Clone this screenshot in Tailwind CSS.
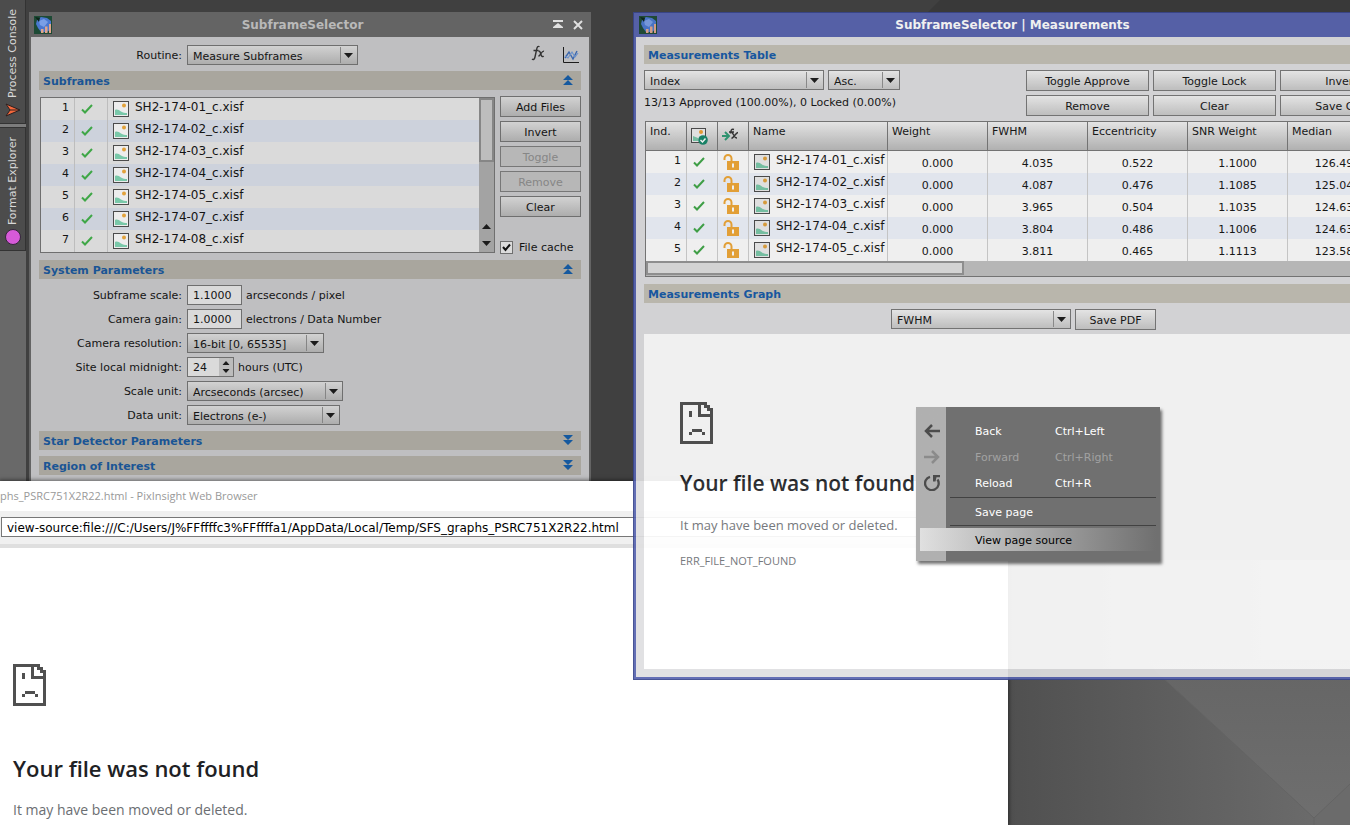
<!DOCTYPE html>
<html lang="en">
<head>
<meta charset="utf-8">
<title>PixInsight</title>
<script src="https://cdn.jsdelivr.net/npm/@tailwindcss/browser@4"></script>
</head>
<body class="h-screen overflow-hidden bg-[#404040] font-['DejaVu_Sans',Verdana,sans-serif] text-[11px] leading-5 text-[#141414]">

<svg class="hidden" xmlns="http://www.w3.org/2000/svg">
  <symbol id="app" viewBox="0 0 18 18">
    <rect width="18" height="18" fill="#1d4a35"/>
    <path d="M3 4l4-3 6 1 4 3v8l-4 3H7l-3-4-2-4z" fill="#4a78d0"/><path d="M5 5l5-2 4 3-4 5-4-2z" fill="#7a9fe6"/><path d="M1 1l5 1-1 4z" fill="#0c2418"/>
    <path d="M7 13h2.500v4H7zM11 10.500h2.500V17H11zM15 8h2v9h-2z" fill="#e0a58c"/>
  </symbol>
  <symbol id="image" viewBox="0 0 16 16">
    <rect x=".5" y=".5" width="15" height="15" fill="#ededed" stroke="#4b4b4b"/>
    <path d="M2 9c2-1 4 0 6 1.500s4 1.500 6 1.500v2H2z" fill="#79c8a9"/><circle cx="11" cy="4.500" r="2" fill="#e2a23b"/>
  </symbol>
  <symbol id="check" viewBox="0 0 12 10"><path d="M1 5.500l3 3L11 1" fill="none" stroke="#3fa747" stroke-width="2"/></symbol>
  <symbol id="lock" viewBox="0 0 17 17">
    <path d="M1.500 6V4.500a3.500 3.500 0 0 1 7 0V8" fill="none" stroke="#f0a836" stroke-width="2"/>
    <path d="M4 7h12v9H4z" fill="#f0a836"/><path d="M9 9.500h2v4H9z" fill="#fff"/>
  </symbol>
  <symbol id="up" viewBox="0 0 10 11"><path d="M5 0l5 5H0zM5 5l5 5H0z" fill="#15599f"/></symbol>
  <symbol id="down" viewBox="0 0 10 11"><path d="M0 0h10L5 5zM0 5h10l-5 5z" fill="#15599f"/></symbol>
  <symbol id="tri" viewBox="0 0 9 5"><path d="M0 0h9L4.500 5z" fill="#1b1b1b"/></symbol>
  <symbol id="triup" viewBox="0 0 9 5"><path d="M0 5h9L4.500 0z" fill="#1b1b1b"/></symbol>
  <symbol id="sad" viewBox="0 0 33 42" shape-rendering="crispEdges">
    <path fill="#505050" d="M0 0h27v3h3v3h3v36H0zM3 3v36h27V15H18V3zM21 3v9h9V9h-3V6h-3V3z"/>
    <path fill="#505050" d="M9 9h3v6H9zM12 27h10v3H12zM9 30h3v3H9zM22 30h3v3h-3z"/>
  </symbol>
  <symbol id="fx" viewBox="0 0 14 16">
    <path d="M8.500 1.800C7 .6 6 2 5.500 5L4 12c-.5 2.500-1.800 3-3 2M2.500 5.500h5M7.500 6.500c2-1.500 2 4 3.500 5 .6.4 1.200 0 1.500-.6M13 6.200c-2-.5-3 3-5.500 5.200" fill="none" stroke="#333" stroke-width="1.400"/>
  </symbol>
</svg>

<main class="relative h-full w-full overflow-hidden">
  <!-- Workspace wallpaper -->
  <div class="absolute inset-0">
    <svg class="h-full w-full" viewBox="0 0 1350 825" preserveAspectRatio="none" aria-hidden="true">
      <defs>
        <linearGradient id="w1" x1="1008" x2="1320" y1="0" y2="0" gradientUnits="userSpaceOnUse"><stop stop-color="#505050"/><stop offset="1" stop-color="#6b6b6b"/></linearGradient>
        <linearGradient id="w2" x1="0" x2="0" y1="660" y2="825" gradientUnits="userSpaceOnUse"><stop stop-color="#656565"/><stop offset="1" stop-color="#6f6f6f"/></linearGradient>
      </defs>
      <path d="M940 0h410v20H920z" fill="#393939"/>
      <path d="M1008 560h342v265h-342z" fill="url(#w1)"/>
      <path d="M1144 660h206v124l-36 34z" fill="url(#w2)"/>
      <path d="M1144 660l170 158 36-34M1314 818v7" fill="none" stroke="#646464"/>
    </svg>
  </div>

  <!-- Docked tabs -->
  <aside class="absolute inset-y-0 left-0 flex w-[26px] flex-col bg-[#696969] text-[#d8d8d8]">
    <button class="flex h-[124px] flex-col items-center justify-end gap-1 border-r border-b border-[#333] bg-[#4c4c4c] pb-[5px]">
      <span class="rotate-180 leading-4 whitespace-nowrap [writing-mode:vertical-rl]">Process Console</span>
      <svg class="size-4" viewBox="0 0 16 16"><path d="M1 2l14 6-14 6 4-6z" fill="#f4683c" stroke="#2a2020"/><path d="M5 8h9" stroke="#2a2020"/></svg>
    </button>
    <div class="h-[3px] bg-[#7c7c7c]"></div>
    <button class="flex h-[124px] flex-col items-center justify-end gap-1 border-r border-y border-[#333] bg-[#4c4c4c] pb-[5px]">
      <span class="rotate-180 leading-4 whitespace-nowrap [writing-mode:vertical-rl]">Format Explorer</span>
      <span class="size-4 rounded-full border border-[#33263a] bg-[#d65ad8]"></span>
    </button>
  </aside>

  <!-- SubframeSelector -->
  <section class="absolute top-3 left-[29px] h-[490px] w-[562px] border-x-2 border-[#646464] bg-[#bfbfc1]">
    <header class="flex h-[25px] items-center bg-[#646464] px-[3px]">
      <svg class="size-[18px]"><use href="#app"/></svg>
      <h2 class="flex-1 text-center text-xs font-bold text-[#b9b9b9]">SubframeSelector</h2>
      <button class="mr-2.5" aria-label="Shade"><svg class="h-[9px] w-2.5" viewBox="0 0 10 9"><path d="M0 0h10v2H0zM5 3l5 4v1H0V7z" fill="#e0e0e0"/></svg></button>
      <button class="mr-[3px]" aria-label="Close"><svg class="size-[10px]" viewBox="0 0 10 10"><path d="M1 1l8 8M9 1L1 9" stroke="#e0e0e0" stroke-width="2"/></svg></button>
    </header>
    <div class="flex flex-col px-2 pt-2">
      <div class="flex h-5 items-center">
        <label for="routine" class="mr-[5px] w-[143px] pt-0.5 text-right">Routine:</label>
        <span class="relative h-5 w-[171px]"><select id="routine" class="h-5 w-full appearance-none border border-[#6f6f6f] bg-linear-to-b from-[#d2d2d2] to-[#adadad] pt-px pl-[5px]"><option>Measure Subframes</option></select><span class="pointer-events-none absolute inset-y-[2px] right-0.5 flex w-4 items-center justify-center border-l border-[#858585]"><svg class="h-[5px] w-[9px]"><use href="#tri"/></svg></span></span>
        <button class="ml-auto pb-1" aria-label="Expressions"><svg class="h-4 w-3.5"><use href="#fx"/></svg></button>
        <button class="mr-0.5 ml-[18px]" aria-label="Measurements"><svg class="size-4" viewBox="0 0 16 16"><path d="M.5 0v15.500H16" fill="none" stroke="#1c1c1c"/><path d="M2 11l4-6 4 7 4-8" fill="none" stroke="#3b67ae" stroke-width="1.400"/><path d="M2 9l3 2 4-6 3 5 3-4" fill="none" stroke="#6b92cc" stroke-width="1.200"/></svg></button>
      </div>
      <button class="mt-1.5 flex h-[19px] items-center justify-between bg-[#a9a69e] pt-0.5 pr-2 pl-1 font-bold text-[#1a5595]">Subframes<svg class="mb-0.5 h-[11px] w-2.5"><use href="#up"/></svg></button>
      <div class="mt-1.5 flex">
        <div class="mt-px ml-px flex h-[156px] w-[455px] border border-[#6f6f6f] bg-[#dadada]">
          <table class="w-full flex-1 border-separate border-spacing-0 self-start"><tbody id="files"></tbody></table>
          <div class="flex w-[15px] flex-col items-center bg-[#a3a3a3]">
            <div class="h-16 w-full border-2 border-[#868686] bg-[#bdbdbd]"></div>
            <svg class="mt-auto h-[5px] w-[9px]"><use href="#triup"/></svg>
            <svg class="mt-3 mb-[6px] h-[5px] w-[9px]"><use href="#tri"/></svg>
          </div>
        </div>
        <div class="ml-[5px] flex w-[81px] flex-col gap-1">
          <button class="h-[21px] border border-[#6f6f6f] bg-linear-to-b from-[#d2d2d2] to-[#adadad] pt-px">Add Files</button>
          <button class="h-[21px] border border-[#6f6f6f] bg-linear-to-b from-[#d2d2d2] to-[#adadad] pt-px">Invert</button>
          <button disabled class="h-[21px] border border-[#777] bg-[#b7b7b7] pt-px text-[#868686]">Toggle</button>
          <button disabled class="h-[21px] border border-[#777] bg-[#b7b7b7] pt-px text-[#868686]">Remove</button>
          <button class="h-[21px] border border-[#6f6f6f] bg-linear-to-b from-[#d2d2d2] to-[#adadad] pt-px">Clear</button>
          <label class="mt-[19px] flex h-3.5 items-center gap-1.5 whitespace-nowrap"><span class="relative flex size-[13px]"><input type="checkbox" checked class="size-[13px] appearance-none border border-[#6f6f6f] bg-[#dcdcdc]"><svg class="pointer-events-none absolute inset-0 size-[13px]" viewBox="0 0 13 13"><path d="M3 6l2.500 3L10 3.500" fill="none" stroke="#111" stroke-width="2"/></svg></span><span class="pt-0.5">File cache</span></label>
        </div>
      </div>
      <button class="mt-1.5 flex h-[19px] items-center justify-between bg-[#a9a69e] pt-0.5 pr-2 pl-1 font-bold text-[#1a5595]">System Parameters<svg class="mb-0.5 h-[11px] w-2.5"><use href="#up"/></svg></button>
      <div class="mt-1.5 grid grid-cols-[143px_1fr] gap-x-[5px] gap-y-1 leading-[22px] *:h-5">
        <label for="scale" class="text-right">Subframe scale:</label>
        <span class="flex gap-1"><input id="scale" value="1.1000" class="h-5 w-[55px] border border-[#6f6f6f] bg-[#dadada] px-[5px] pt-px">arcseconds / pixel</span>
        <label for="gain" class="text-right">Camera gain:</label>
        <span class="flex gap-1"><input id="gain" value="1.0000" class="h-5 w-[55px] border border-[#6f6f6f] bg-[#dadada] px-[5px] pt-px">electrons / Data Number</span>
        <label for="res" class="text-right">Camera resolution:</label>
        <span class="relative h-5 w-[137px]"><select id="res" class="h-5 w-full appearance-none border border-[#6f6f6f] bg-linear-to-b from-[#d2d2d2] to-[#adadad] pl-[5px]"><option>16-bit [0, 65535]</option></select><span class="pointer-events-none absolute inset-y-[2px] right-0.5 flex w-4 items-center justify-center border-l border-[#858585]"><svg class="h-[5px] w-[9px]"><use href="#tri"/></svg></span></span>
        <label for="mid" class="text-right">Site local midnight:</label>
        <span class="flex gap-1"><span class="flex h-5 w-[47px] border border-[#6f6f6f] bg-[#dadada]"><input id="mid" value="24" class="w-[31px] pt-px pl-[5px]"><span class="flex flex-1 flex-col items-center justify-center gap-1 bg-[#bcbcbc]"><svg class="h-1 w-2" viewBox="0 0 9 5"><use href="#triup"/></svg><svg class="h-1 w-2" viewBox="0 0 9 5"><use href="#tri"/></svg></span></span>hours (UTC)</span>
        <label for="sunit" class="text-right">Scale unit:</label>
        <span class="relative h-5 w-[156px]"><select id="sunit" class="h-5 w-full appearance-none border border-[#6f6f6f] bg-linear-to-b from-[#d2d2d2] to-[#adadad] pl-[5px]"><option>Arcseconds (arcsec)</option></select><span class="pointer-events-none absolute inset-y-[2px] right-0.5 flex w-4 items-center justify-center border-l border-[#858585]"><svg class="h-[5px] w-[9px]"><use href="#tri"/></svg></span></span>
        <label for="dunit" class="text-right">Data unit:</label>
        <span class="relative h-5 w-[153px]"><select id="dunit" class="h-5 w-full appearance-none border border-[#6f6f6f] bg-linear-to-b from-[#d2d2d2] to-[#adadad] pl-[5px]"><option>Electrons (e-)</option></select><span class="pointer-events-none absolute inset-y-[2px] right-0.5 flex w-4 items-center justify-center border-l border-[#858585]"><svg class="h-[5px] w-[9px]"><use href="#tri"/></svg></span></span>
      </div>
      <button class="mt-1.5 flex h-[19px] items-center justify-between bg-[#a9a69e] pt-0.5 pr-2 pl-1 font-bold text-[#1a5595]">Star Detector Parameters<svg class="mb-0.5 h-[11px] w-2.5"><use href="#down"/></svg></button>
      <button class="mt-1.5 flex h-[19px] items-center justify-between bg-[#a9a69e] pt-0.5 pr-2 pl-1 font-bold text-[#1a5595]">Region of Interest<svg class="mb-0.5 h-[11px] w-2.5"><use href="#down"/></svg></button>
    </div>
  </section>

  <!-- Web browser window -->
  <section class="absolute top-[481px] bottom-0 left-0 flex w-[1008px] flex-col bg-white shadow-[0_0_4px_1px_rgba(0,0,0,0.5)]">
    <h2 class="h-[30px] font-['Open_Sans','Noto_Sans',sans-serif] text-[11px] leading-[30px] text-[#999]">phs_PSRC751X2R22.html - PixInsight Web Browser</h2>
    <div class="flex border-b-4 border-[#dfdfdf] bg-[#f0f0f0] px-px pt-1.5 pb-[7px]">
      <input aria-label="Address" value="view-source:file:///C:/Users/J%FFffffc3%FFffffa1/AppData/Local/Temp/SFS_graphs_PSRC751X2R22.html" class="h-5 w-full border border-[#777] bg-white px-[5px] pt-0.5 text-xs text-black">
    </div>
    <div class="flex flex-col px-[13px] pt-[116px] font-['Open_Sans','Noto_Sans',sans-serif]">
      <svg class="h-[42px] w-[33px]"><use href="#sad"/></svg>
      <h1 class="mt-[47px] text-[22px] leading-[30px] font-semibold text-[#202124]">Your file was not found</h1>
      <p class="mt-[17px] text-sm leading-5 text-[#6b6e72]">It may have been moved or deleted.</p>
    </div>
  </section>

  <!-- Measurements window, slightly see-through -->
  <section class="absolute top-3 left-[633px] flex h-[668px] w-[781px] flex-col border border-[#39468b] bg-[#dfdfe1] opacity-92">
    <div class="flex flex-1 flex-col border-2 border-t-0 border-[#5763af]">
      <header class="flex h-6 items-center bg-[#5763af] px-[3px]">
        <svg class="size-[18px]"><use href="#app"/></svg>
        <h2 class="mr-10 flex-1 text-center text-xs font-bold text-white">SubframeSelector | Measurements</h2>
      </header>
      <div class="flex flex-1 flex-col p-2">
        <button class="flex h-[19px] items-center bg-[#c4c1b6] pt-0.5 pl-1 font-bold text-[#1459a8]">Measurements Table</button>
        <div class="mt-1.5 flex justify-between">
          <div>
            <div class="flex gap-1">
              <span class="relative h-5 w-[180px]"><select aria-label="Sort by" class="h-5 w-full appearance-none border border-[#787878] bg-linear-to-b from-[#f2f2f2] to-[#c9c9c9] pt-px pl-[5px]"><option>Index</option></select><span class="pointer-events-none absolute inset-y-[2px] right-0.5 flex w-4 items-center justify-center border-l border-[#909090]"><svg class="h-[5px] w-[9px]"><use href="#tri"/></svg></span></span>
              <span class="relative h-5 w-[72px]"><select aria-label="Order" class="h-5 w-full appearance-none border border-[#787878] bg-linear-to-b from-[#f2f2f2] to-[#c9c9c9] pt-px pl-[5px]"><option>Asc.</option></select><span class="pointer-events-none absolute inset-y-[2px] right-0.5 flex w-4 items-center justify-center border-l border-[#909090]"><svg class="h-[5px] w-[9px]"><use href="#tri"/></svg></span></span>
            </div>
            <p class="mt-0.5 leading-[22px] whitespace-nowrap">13/13 Approved (100.00%), 0 Locked (0.00%)</p>
          </div>
          <div class="grid grid-cols-[123px_123px_123px] gap-1">
            <button class="h-[21px] border border-[#787878] bg-linear-to-b from-[#f2f2f2] to-[#c9c9c9] pt-px">Toggle Approve</button>
            <button class="h-[21px] border border-[#787878] bg-linear-to-b from-[#f2f2f2] to-[#c9c9c9] pt-px">Toggle Lock</button>
            <button class="h-[21px] border border-[#787878] bg-linear-to-b from-[#f2f2f2] to-[#c9c9c9] pt-px">Invert</button>
            <button class="h-[21px] border border-[#787878] bg-linear-to-b from-[#f2f2f2] to-[#c9c9c9] pt-px">Remove</button>
            <button class="h-[21px] border border-[#787878] bg-linear-to-b from-[#f2f2f2] to-[#c9c9c9] pt-px">Clear</button>
            <button class="h-[21px] border border-[#787878] bg-linear-to-b from-[#f2f2f2] to-[#c9c9c9] pt-px">Save CSV</button>
          </div>
        </div>
        <div class="mt-[5px] ml-px flex flex-col overflow-hidden border border-[#787878] bg-white">
          <table class="w-full table-fixed border-separate border-spacing-0">
            <colgroup><col class="w-[41px]"><col class="w-[31px]"><col class="w-[31px]"><col class="w-[139px]"><col class="w-[100px]"><col class="w-[100px]"><col class="w-[100px]"><col class="w-[100px]"><col class="w-[100px]"><col></colgroup>
            <thead><tr class="h-[29px] bg-linear-to-b from-[#f2f2f2] to-[#b8b8b8] text-left align-top [&>th]:border-r [&>th]:border-b [&>th]:border-[#787878] [&>th]:p-0 [&>th]:pl-1 [&>th]:font-normal [&>th]:leading-5">
              <th>Ind.</th>
              <th><svg class="mt-1.5 size-[17px]" viewBox="0 0 17 17"><rect x=".5" y=".5" width="14" height="14" fill="#eee" stroke="#4b4b4b"/><path d="M2 8l5 2v3H2z" fill="#79c8a9"/><circle cx="10" cy="4" r="2" fill="#f0a030"/><circle cx="12" cy="12" r="4.800" fill="#16876a"/><path d="M9.500 12l2 2 3-3.500" fill="none" stroke="#fff" stroke-width="1.500"/></svg></th>
              <th><svg class="mt-[5px] size-4" viewBox="0 0 16 16"><path d="M0 9h7M3 5l4 4-4 4" fill="none" stroke="#2e9b75" stroke-width="2"/><path d="M12 2.500c-3-1-3 1-3.500 4M7 5h5M9.500 6c2-1 2 5 5.500 5M16 5.500c-2 0-4 5-6.500 6" fill="none" stroke="#333" stroke-width="1.400"/></svg></th>
              <th>Name</th><th>Weight</th><th>FWHM</th><th>Eccentricity</th><th>SNR Weight</th><th>Median</th><th></th>
            </tr></thead>
            <tbody id="meas"></tbody>
          </table>
          <div class="h-[15px] bg-[#c0c0c0]"><div class="h-[14px] w-[318px] border-2 border-[#959595] bg-[#e0e0e0]"></div></div>
        </div>
        <button class="mt-[7px] flex h-[19px] items-center bg-[#c4c1b6] pt-0.5 pl-1 font-bold text-[#1459a8]">Measurements Graph</button>
        <div class="mt-1.5 mb-1 flex justify-center gap-1">
          <span class="relative h-5 w-[180px]"><select aria-label="Graph" class="h-5 w-full appearance-none border border-[#787878] bg-linear-to-b from-[#f2f2f2] to-[#c9c9c9] pt-px pl-[5px]"><option>FWHM</option></select><span class="pointer-events-none absolute inset-y-[2px] right-0.5 flex w-4 items-center justify-center border-l border-[#909090]"><svg class="h-[5px] w-[9px]"><use href="#tri"/></svg></span></span>
          <button class="h-[21px] w-[81px] border border-[#787878] bg-linear-to-b from-[#f2f2f2] to-[#c9c9c9] pt-px">Save PDF</button>
        </div>
        <div class="flex-1 bg-white px-9 pt-[68px] font-['Open_Sans','Noto_Sans',sans-serif]">
          <svg class="h-[42px] w-[33px]"><use href="#sad"/></svg>
          <h1 class="mt-6 text-[21px] leading-[30px] font-semibold text-[#202124]">Your file was not found</h1>
          <p class="mt-[17px] text-[13px] leading-5 text-[#6b6e72]">It may have been moved or deleted.</p>
          <p class="mt-4 text-[11px] leading-5 text-[#6b6e72]">ERR_FILE_NOT_FOUND</p>
        </div>
      </div>
    </div>
  </section>

  <!-- Context menu -->
  <div role="menu" class="absolute top-[407px] left-[916px] flex h-[154px] w-[244px] flex-col bg-linear-to-r from-[#b0b0b0] from-[30px] to-[#707070] to-[30px] pt-[11px] leading-[22px] text-white shadow-[2px_3px_3px_rgba(0,0,0,0.55)]">
    <button role="menuitem" class="grid h-[26px] grid-cols-[59px_80px_1fr] items-center text-left"><svg class="ml-2 h-[14px] w-4" viewBox="0 0 16 14"><path d="M16 7H2M8 1L2 7l6 6" fill="none" stroke="#4c4c4c" stroke-width="2.500"/></svg><span class="pt-0.5">Back</span><span class="pt-0.5">Ctrl+Left</span></button>
    <button role="menuitem" disabled class="grid h-[26px] grid-cols-[59px_80px_1fr] items-center text-left text-[#a2a2a2]"><svg class="ml-2 h-[14px] w-4" viewBox="0 0 16 14"><path d="M0 7h14M8 1l6 6-6 6" fill="none" stroke="#8b8b8b" stroke-width="2.500"/></svg><span class="pt-0.5">Forward</span><span class="pt-0.5">Ctrl+Right</span></button>
    <button role="menuitem" class="grid h-[26px] grid-cols-[59px_80px_1fr] items-center text-left"><svg class="ml-2 size-4" viewBox="0 0 16 16"><path d="M6 1.800A6.800 6.800 0 1 0 13.500 4.500" fill="none" stroke="#4c4c4c" stroke-width="2.300"/><path d="M9 0h7v2.300h-3.500L11.500 6.500H9z" fill="#4c4c4c"/></svg><span class="pt-0.5">Reload</span><span class="pt-0.5">Ctrl+R</span></button>
    <div class="mt-px mr-1 ml-[34px] border-t border-[#424242]"></div>
    <button role="menuitem" class="h-[27px] pt-0.5 pl-[59px] text-left">Save page</button>
    <div class="mr-1 ml-[34px] border-t border-[#424242]"></div>
    <button role="menuitem" class="mx-1 mt-0.5 h-[23px] bg-linear-to-r from-[#e0e0e0] to-[#707070] pt-0.5 pl-[55px] text-left text-black">View page source</button>
  </div>
</main>

<script>
  const names = ['01', '02', '03', '04', '05', '07', '08'];
  document.getElementById('files').innerHTML = names.map((n, i) => `
    <tr class="h-[22px] odd:bg-[#dadada] even:bg-[#cdd2dc]">
      <td class="w-[34px] border-r border-[#bdbdbd] p-0 pr-[5px] pb-0.5 text-right leading-[18px]">${i + 1}</td>
      <td class="w-[33px] border-r border-[#bdbdbd] p-0"><svg class="ml-1.5 h-2.5 w-3"><use href="#check"/></svg></td>
      <td class="p-0"><div class="flex items-center gap-1.5 pl-[5px]"><svg class="size-4"><use href="#image"/></svg><span class="pb-1 text-xs leading-[18px]">SH2-174-${n}_c.xisf</span></div></td>
    </tr>`).join('');
  const rows = [
    ['4.035', '0.522', '1.1000', '126.499'],
    ['4.087', '0.476', '1.1085', '125.044'],
    ['3.965', '0.504', '1.1035', '124.633'],
    ['3.804', '0.486', '1.1006', '124.633'],
    ['3.811', '0.465', '1.1113', '123.588']
  ];
  document.getElementById('meas').innerHTML = rows.map((r, i) => `
    <tr class="h-[22px] odd:bg-[#fefefe] even:bg-[#eff3fc] [&>td]:border-r [&>td]:border-[#d0d0d0]">
      <td class="p-0 pr-[5px] pb-0.5 text-right leading-[18px]">${i + 1}</td>
      <td class="p-0"><svg class="ml-1.5 h-2.5 w-3"><use href="#check"/></svg></td>
      <td class="p-0"><svg class="ml-[5px] size-[17px]"><use href="#lock"/></svg></td>
      <td class="p-0"><div class="flex items-center gap-1.5 pl-[5px] whitespace-nowrap"><svg class="size-4 shrink-0"><use href="#image"/></svg><span class="pb-1 text-xs leading-[18px]">SH2-174-${names[i]}_c.xisf</span></div></td>
      <td class="p-0 pt-1 text-center leading-[18px]">0.000</td>
      ${r.map(v => `<td class="p-0 pt-1 text-center leading-[18px]">${v}</td>`).join('')}
      <td class="p-0"></td>
    </tr>`).join('');
</script>
</body>
</html>
